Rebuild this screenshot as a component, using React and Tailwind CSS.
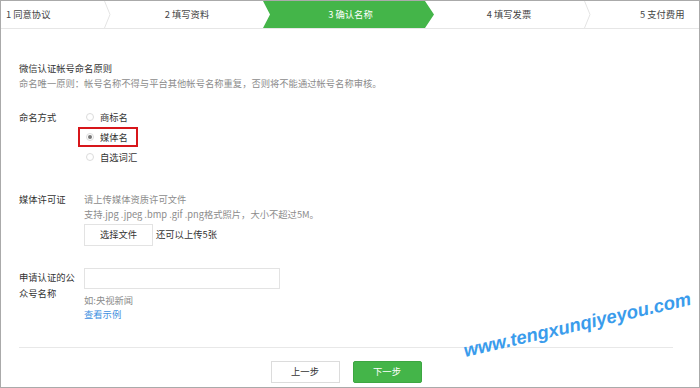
const steps = [
  { label: "1 同意协议", cls: "w-[103px] pl-[5px] text-left" },
  { label: "2 填写资料", cls: "w-[152px] text-center" },
];

const Chevron = () => (
  <svg width="7" height="27" viewBox="0 0 7 27" className="shrink-0">
    <polyline points="0.5,0 6,13.5 0.5,27" fill="none" stroke="#e4e4e4" strokeWidth="1" />
  </svg>
);

const Radio = ({ checked }) => (
  <span className="w-[8px] h-[8px] rounded-full border border-[#dcdcdc] bg-white flex items-center justify-center shrink-0">
    {checked && <span className="w-[4px] h-[4px] rounded-full bg-[#777]" />}
  </span>
);

const options = [
  { label: "商标名", checked: false },
  { label: "媒体名", checked: true },
  { label: "自选词汇", checked: false },
];

export default function App() {
  return (
    <div
      className="relative w-[700px] h-[388px] overflow-hidden bg-white border border-[#aaaaaa] text-[9.3px] text-[#333]"
      style={{ fontFamily: "'Noto Sans CJK SC', 'Noto Sans', sans-serif" }}
    >
      {/* steps */}
      <div className="flex h-[28px] border-b border-[#e6e6e6] leading-[27px] text-[#444]">
        <div className={steps[0].cls}>{steps[0].label}</div>
        <Chevron />
        <div className={steps[1].cls}>{steps[1].label}</div>
        <div className="w-[171px] h-[27px] bg-[#44b549] text-white text-center pl-[4px] [clip-path:polygon(0_0,calc(100%-9px)_0,100%_50%,calc(100%-9px)_100%,0_100%,7px_50%)]">
          3 确认名称
        </div>
        <div className="w-[150px] text-center">4 填写发票</div>
        <Chevron />
        <div className="flex-1 pl-[49px]">5 支付费用</div>
      </div>

      <div className="pl-[18px] pr-[26px]">
        <div className="mt-[32px] leading-[15px]">
          <div>微信认证帐号命名原则</div>
          <div className="text-[#8c8c8c]">命名唯一原则：帐号名称不得与平台其他帐号名称重复，否则将不能通过帐号名称审核。</div>
        </div>

        {/* naming */}
        <div className="flex mt-[16px]">
          <div className="w-[59px] leading-[20px]">命名方式</div>
          <div className="flex flex-col items-start">
            {options.map((o) => (
              <div
                key={o.label}
                className={`h-[20px] flex items-center gap-[6px] pl-[6px] border-2 whitespace-nowrap ${o.checked ? "w-[60px] border-[#d7161b]" : "pr-[6px] border-transparent"}`}
              >
                <Radio checked={o.checked} />
                <span className="leading-[16px]">{o.label}</span>
              </div>
            ))}
          </div>
        </div>

        {/* license */}
        <div className="flex mt-[25px]">
          <div className="w-[65px] leading-[15px]">媒体许可证</div>
          <div className="flex flex-col">
            <div className="leading-[15px] text-[#8c8c8c]">请上传媒体资质许可文件</div>
            <div className="leading-[15px] text-[#8c8c8c]">支持.jpg .jpeg .bmp .gif .png格式照片，大小不超过5M。</div>
            <div className="flex items-center mt-[2px]">
              <button className="w-[69px] h-[22px] border border-[#e3e3e3] bg-white text-[#333] text-[9.3px]">选择文件</button>
              <span className="ml-[3px]">还可以上传5张</span>
            </div>
          </div>
        </div>

        {/* account name */}
        <div className="flex mt-[22px]">
          <div className="w-[65px]">
            <div className="w-[58px] mt-[1px] leading-[16px]">申请认证的公众号名称</div>
          </div>
          <div className="flex flex-col">
            <input className="w-[196px] h-[21px] border border-[#e3e3e3] bg-white outline-none" />
            <div className="mt-[4px] leading-[14px] text-[#8c8c8c]">如:央视新闻</div>
            <div className="leading-[14px] text-[#3d8fe0]">查看示例</div>
          </div>
        </div>

        <div className="mt-[26px] border-t border-[#e8e8e8]" />

        <div className="flex justify-center gap-[13px] mt-[13px]">
          <button className="w-[69px] h-[22px] border border-[#dcdcdc] bg-white text-[#333] text-[9.3px]">上一步</button>
          <button className="w-[69px] h-[22px] rounded-[2px] bg-[#44b549] border border-[#3da642] text-white text-[9.3px]">下一步</button>
        </div>
      </div>

      {/* watermark */}
      <div
        className="absolute left-[460px] top-[313px] w-[232px] text-center text-[18.5px] leading-[22px] font-bold italic text-[#3a9cec] -rotate-[13deg] whitespace-nowrap"
        style={{ fontFamily: "'Liberation Sans', Arial, sans-serif" }}
      >
        www.tengxunqiyeyou.com
      </div>
    </div>
  );
}
